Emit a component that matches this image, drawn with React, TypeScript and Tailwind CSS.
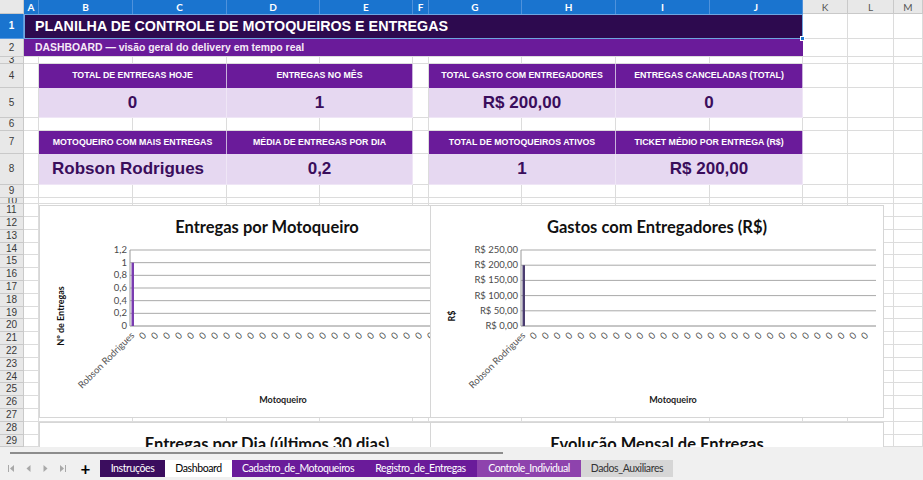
import React from 'react';

// planilha: colunas A..M com as larguras medidas na tela
const GRID = 'grid grid-cols-[24px_15px_94px_94px_93px_93px_16px_93px_94px_94px_93px_45px_46px_1fr]';
const COLS = ['A', 'B', 'C', 'D', 'E', 'F', 'G', 'H', 'I', 'J', 'K', 'L', 'M'];
const SELECTED = ['A', 'B', 'C', 'D', 'E', 'F', 'G', 'H', 'I', 'J'];

const cellCls = 'border-r border-b border-[#dcdcdc]';

function Empty() {
  return <div className={cellCls} />;
}

function RowHead({ n, selected }: { n: number; selected?: boolean }) {
  return (
    <div
      className={
        selected
          ? 'bg-[#1a74cf] text-white font-bold border-r border-b border-[#5c9be0] flex items-center justify-center overflow-hidden text-[10px] leading-none'
          : 'bg-[#e8e8e8] text-[#3a3a3a] border-r border-b border-[#c9c9c9] flex items-center justify-center overflow-hidden text-[10px] leading-none'
      }
    >
      {n}
    </div>
  );
}

function ColumnHeader() {
  return (
    <div className={`${GRID} h-[14px] font-['Lato',sans-serif] text-[10px] leading-none`}>
      <div className="bg-[#e8e8e8] border-r border-b border-[#c9c9c9]" />
      {COLS.map((c) =>
        SELECTED.includes(c) ? (
          <div
            key={c}
            className="bg-[#1a74cf] text-white font-bold border-r border-[#4f92dc] flex items-center justify-center"
          >
            {c}
          </div>
        ) : (
          <div
            key={c}
            className="bg-[#e8e8e8] text-[#555] border-r border-b border-[#c9c9c9] flex items-center justify-center"
          >
            {c}
          </div>
        )
      )}
    </div>
  );
}

function KpiHead({ label }: { label: string }) {
  return (
    <div className="col-span-2 bg-[#6a1b9a] text-white text-[8.8px] font-bold flex items-center justify-center border-r border-[#c9b3dc] whitespace-nowrap">
      {label}
    </div>
  );
}

function KpiValue({ value, left }: { value: string; left?: boolean }) {
  return (
    <div
      className={
        left
          ? 'col-span-2 bg-[#e6d8f1] text-[#3a0d5c] text-[17px] font-bold flex items-center pl-[13px] border-r border-b border-[#efe6f6]'
          : 'col-span-2 bg-[#e6d8f1] text-[#3a0d5c] text-[17px] font-bold flex items-center justify-center border-r border-b border-[#efe6f6]'
      }
    >
      {value}
    </div>
  );
}

function KpiRows({ top, heads, values }: { top: number; heads: string[]; values: string[] }) {
  return (
    <>
      <div className={`${GRID} ${top === 4 ? 'h-[24px]' : 'h-[23px]'}`}>
        <RowHead n={top} />
        <Empty />
        <KpiHead label={heads[0]} />
        <KpiHead label={heads[1]} />
        <Empty />
        <KpiHead label={heads[2]} />
        <KpiHead label={heads[3]} />
        <Empty />
        <Empty />
        <Empty />
      </div>
      <div className={`${GRID} ${top === 4 ? 'h-[30px]' : 'h-[31px]'}`}>
        <RowHead n={top + 1} />
        <Empty />
        <KpiValue value={values[0]} left={top === 7} />
        <KpiValue value={values[1]} />
        <Empty />
        <KpiValue value={values[2]} />
        <KpiValue value={values[3]} />
        <Empty />
        <Empty />
        <Empty />
      </div>
    </>
  );
}

function BlankRow({ n, h }: { n: number; h: string }) {
  return (
    <div className={`${GRID} ${h}`}>
      <RowHead n={n} />
      {COLS.map((c) => (
        <Empty key={c} />
      ))}
    </div>
  );
}

interface ChartProps {
  width: number;
  title: string;
  titleX: number;
  yLabels: string[];
  yTitle: string;
  catWidth: number;
  barFrac: number;
  barColor: string;
  plotRight: number;
  xTitleX: number;
}

function BarChart({ width, title, titleX, yLabels, yTitle, catWidth, barFrac, barColor, plotRight, xTitleX }: ChartProps) {
  const left = 90;
  const top = 44;
  const bottom = 120;
  const step = (bottom - top) / (yLabels.length - 1);
  const cats = Array.from({ length: 30 }, (_, i) => (i === 0 ? 'Robson Rodrigues' : '0'));

  return (
    <svg width={width} height={213} className="block font-['Lato',sans-serif]">
      <text x={titleX} y={27} textAnchor="middle" fontSize={16.5} fontWeight={700} fill="#111">
        {title}
      </text>
      {yLabels.map((lab, i) => {
        const y = top + step * i;
        return (
          <g key={lab}>
            <line x1={left} x2={plotRight} y1={y} y2={y} stroke={i === yLabels.length - 1 ? '#8c8c8c' : '#a9a9a9'} strokeWidth={1} />
            <text x={left - 3} y={y + 3} textAnchor="end" fontSize={9.5} fill="#4a4a4a">
              {lab}
            </text>
          </g>
        );
      })}
      <line x1={left} x2={left} y1={top} y2={bottom} stroke="#9a9a9a" />
      <rect x={left + 1.5} y={top + (bottom - top) * (1 - barFrac)} width={2.5} height={(bottom - top) * barFrac} fill={barColor} />
      {cats.map((c, i) => {
        const cx = left + catWidth * (i + 0.5);
        return (
          <text
            key={i}
            transform={`translate(${cx - 1},${bottom + 10}) rotate(-45)`}
            textAnchor="end"
            fontSize={9.5}
            fill="#555"
          >
            {c}
          </text>
        );
      })}
      <text x={xTitleX} y={197} textAnchor="middle" fontSize={9} fontWeight={700} fill="#222">
        Motoqueiro
      </text>
      <text transform="translate(24,110) rotate(-90)" textAnchor="middle" fontSize={9} fontWeight={700} fill="#111">
        {yTitle}
      </text>
    </svg>
  );
}

function ChartTitleOnly({ width, title, titleX }: { width: number; title: string; titleX: number }) {
  return (
    <svg width={width} height={60} className="block font-['Lato',sans-serif]">
      <text x={titleX} y={27} textAnchor="middle" fontSize={16.5} fontWeight={700} fill="#111">
        {title}
      </text>
    </svg>
  );
}

function NavIcon({ kind }: { kind: 'first' | 'prev' | 'next' | 'last' }) {
  return (
    <div className="w-[17px] flex items-center justify-center">
      <svg width="9" height="9" viewBox="0 0 9 9">
        {kind === 'first' && (
          <>
            <rect x="1" y="1" width="1" height="7" fill="#a8a8a8" />
            <path d="M7 1 L3 4.5 L7 8 Z" fill="#a8a8a8" />
          </>
        )}
        {kind === 'prev' && <path d="M6.5 1 L2.5 4.5 L6.5 8 Z" fill="#a8a8a8" />}
        {kind === 'next' && <path d="M2.5 1 L6.5 4.5 L2.5 8 Z" fill="#a8a8a8" />}
        {kind === 'last' && (
          <>
            <path d="M2 1 L6 4.5 L2 8 Z" fill="#a8a8a8" />
            <rect x="7" y="1" width="1" height="7" fill="#a8a8a8" />
          </>
        )}
      </svg>
    </div>
  );
}

const tabs = [
  { name: 'Instruções', cls: 'w-[65px] bg-[#3b0d5e] text-white' },
  { name: 'Dashboard', cls: 'w-[67px] bg-white text-black' },
  { name: 'Cadastro_de_Motoqueiros', cls: 'w-[132px] bg-[#6a1b9a] text-white' },
  { name: 'Registro_de_Entregas', cls: 'w-[113px] bg-[#6a1b9a] text-white' },
  { name: 'Controle_Individual', cls: 'w-[104px] bg-[#8e43ad] text-white' },
  { name: 'Dados_Auxiliares', cls: 'w-[92px] bg-[#d6d6d6] text-[#333]' },
];

export default function App() {
  const smallRows = Array.from({ length: 19 }, (_, i) => i + 11);

  return (
    <div className="w-[923px] h-[480px] overflow-hidden bg-white flex flex-col font-['Liberation_Sans',Arial,sans-serif]">
      <div className="relative h-[447px] overflow-hidden">
        <ColumnHeader />

        {/* linha 1: título */}
        <div className={`${GRID} h-[25px]`}>
          <RowHead n={1} selected />
          <div className="relative col-span-10 bg-[#2d0a4f] border border-[#6ea6e0] flex items-center pl-[10px] text-white text-[14.3px] font-bold">
            PLANILHA DE CONTROLE DE MOTOQUEIROS E ENTREGAS
            <div className="absolute -right-[3px] -bottom-[3px] w-[5px] h-[5px] bg-[#1a74cf] border border-white" />
          </div>
          <Empty />
          <Empty />
          <Empty />
        </div>

        {/* linha 2: subtítulo */}
        <div className={`${GRID} h-[18px]`}>
          <RowHead n={2} />
          <div className="col-span-10 bg-[#6a1b9a] flex items-center pl-[11px] text-[#f6e9f7] text-[10.4px] font-bold border-b border-[#dcdcdc]">
            DASHBOARD — visão geral do delivery em tempo real
          </div>
          <Empty />
          <Empty />
          <Empty />
        </div>

        <BlankRow n={3} h="h-[7px]" />
        <KpiRows
          top={4}
          heads={['TOTAL DE ENTREGAS HOJE', 'ENTREGAS NO MÊS', 'TOTAL GASTO COM ENTREGADORES', 'ENTREGAS CANCELADAS (TOTAL)']}
          values={['0', '1', 'R$ 200,00', '0']}
        />
        <BlankRow n={6} h="h-[13px]" />
        <KpiRows
          top={7}
          heads={['MOTOQUEIRO COM MAIS ENTREGAS', 'MÉDIA DE ENTREGAS POR DIA', 'TOTAL DE MOTOQUEIROS ATIVOS', 'TICKET MÉDIO POR ENTREGA (R$)']}
          values={['Robson Rodrigues', '0,2', '1', 'R$ 200,00']}
        />
        <BlankRow n={9} h="h-[13px]" />
        <BlankRow n={10} h="h-[6px]" />
        {smallRows.map((n) => (
          <BlankRow key={n} n={n} h={(n - 11) % 5 === 3 ? 'h-[12px]' : 'h-[13px]'} />
        ))}

        {/* gráficos flutuando sobre a planilha */}
        <div className="absolute left-[39px] top-[205px] w-[392px] h-[213px] bg-white border border-[#d6d6d6] overflow-hidden">
          <BarChart
            width={390}
            title="Entregas por Motoqueiro"
            titleX={227}
            yLabels={['1,2', '1', '0,8', '0,6', '0,4', '0,2', '0']}
            yTitle="Nº de Entregas"
            catWidth={12}
            barFrac={1 / 1.2}
            barColor="#7a3db0"
            plotRight={470}
            xTitleX={243}
          />
        </div>
        <div className="absolute left-[430px] top-[205px] w-[454px] h-[213px] bg-white border border-[#d6d6d6] overflow-hidden">
          <BarChart
            width={452}
            title="Gastos com Entregadores (R$)"
            titleX={226}
            yLabels={['R$ 250,00', 'R$ 200,00', 'R$ 150,00', 'R$ 100,00', 'R$ 50,00', 'R$ 0,00']}
            yTitle="R$"
            catWidth={11.83}
            barFrac={0.8}
            barColor="#4b3d70"
            plotRight={445}
            xTitleX={242}
          />
        </div>
        <div className="absolute left-[39px] top-[422px] w-[392px] h-[220px] bg-white border border-[#d6d6d6] overflow-hidden">
          <ChartTitleOnly width={390} title="Entregas por Dia (últimos 30 dias)" titleX={227} />
        </div>
        <div className="absolute left-[430px] top-[422px] w-[454px] h-[220px] bg-white border border-[#d6d6d6] overflow-hidden">
          <ChartTitleOnly width={452} title="Evolução Mensal de Entregas" titleX={226} />
        </div>
      </div>

      {/* barra de abas */}
      <div className="h-[33px] bg-[#f0f0f0] flex flex-col">
        <div className="h-[5px]" />
        <div className="ml-[10px] w-[493px] h-[2px] bg-[#8c8c8c]" />
        <div className="mt-[6px] h-[17px] flex items-stretch font-['Lato',sans-serif]">
          <div className="w-[3px]" />
          <NavIcon kind="first" />
          <NavIcon kind="prev" />
          <NavIcon kind="next" />
          <NavIcon kind="last" />
          <div className="w-[29px] flex items-center justify-center text-[17px] font-bold text-black leading-none">+</div>
          {tabs.map((t) => (
            <div key={t.name} className={`${t.cls} flex items-center justify-center text-[10.5px] tracking-[-0.4px] whitespace-nowrap`}>
              {t.name}
            </div>
          ))}
        </div>
      </div>
    </div>
  );
}
